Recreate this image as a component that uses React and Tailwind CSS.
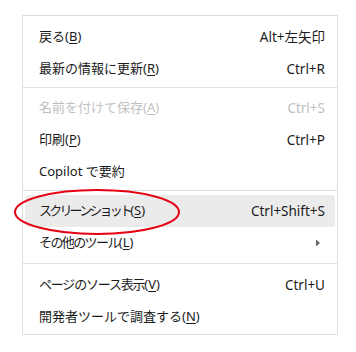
import React from 'react';

const items = [
  { label: '戻る', key: 'B', shortcut: 'Alt+左矢印' },
  { label: '最新の情報に更新', key: 'R', shortcut: 'Ctrl+R' },
  { sep: 'mt-[2px] mb-[4px]' },
  { label: '名前を付けて保存', key: 'A', shortcut: 'Ctrl+S', disabled: true },
  { label: '印刷', key: 'P', shortcut: 'Ctrl+P' },
  { label: 'Copilot で要約' },
  { sep: 'mt-[2px] mb-[4px]' },
  { label: 'スクリーンショット', key: 'S', shortcut: 'Ctrl+Shift+S', active: true, tr: 'tracking-[-2.8px]' },
  { label: 'その他のツール', key: 'L', submenu: true, tr: 'tracking-[-1.6px]' },
  { sep: 'mt-[4px] mb-[5px]' },
  { label: 'ページのソース表示', key: 'V', shortcut: 'Ctrl+U', tr: 'tracking-[-1.2px]' },
  { label: '開発者ツールで調査する', key: 'N' },
];

function MenuRow({ item }) {
  const color = item.disabled ? 'text-[#bfbfbf]' : 'text-[#1b1b1b]';
  return (
    <div
      className={
        'mx-[2px] h-[32px] flex items-center justify-between pl-[14px] pr-[10px] rounded-[4px] ' +
        (item.active ? 'bg-[#ebebeb] ' : '') +
        color
      }
    >
      <span className="text-[13px]">
        <span className={item.tr || ''}>{item.label}</span>
        {item.key && (
          <>
            (<span className="underline underline-offset-2">{item.key}</span>)
          </>
        )}
      </span>
      {item.shortcut && <span>{item.shortcut}</span>}
      {item.submenu && (
        <svg width="6" height="8" viewBox="0 0 6 8" className="mr-[4px]">
          <path d="M1 0.5 L5 4 L1 7.5 Z" fill="#666" />
        </svg>
      )}
    </div>
  );
}

export default function App() {
  return (
    <div className="relative w-[356px] h-[352px] bg-white pt-[15px] pl-[22px] text-[13.5px] font-['Noto_Sans','Noto_Sans_CJK_JP',sans-serif]">
      <div className="w-[316px] h-[320px] border border-[#dedede] bg-white pt-[5px]">
        {items.map((item, i) =>
          item.sep ? (
            <div key={i} className={item.sep + ' h-px bg-[#e0e0e0]'} />
          ) : (
            <MenuRow key={i} item={item} />
          )
        )}
      </div>
      <svg className="absolute left-0 top-0 pointer-events-none" width="356" height="352">
        <ellipse cx="97" cy="212" rx="82" ry="22" fill="none" stroke="#e60012" strokeWidth="2" />
      </svg>
    </div>
  );
}
